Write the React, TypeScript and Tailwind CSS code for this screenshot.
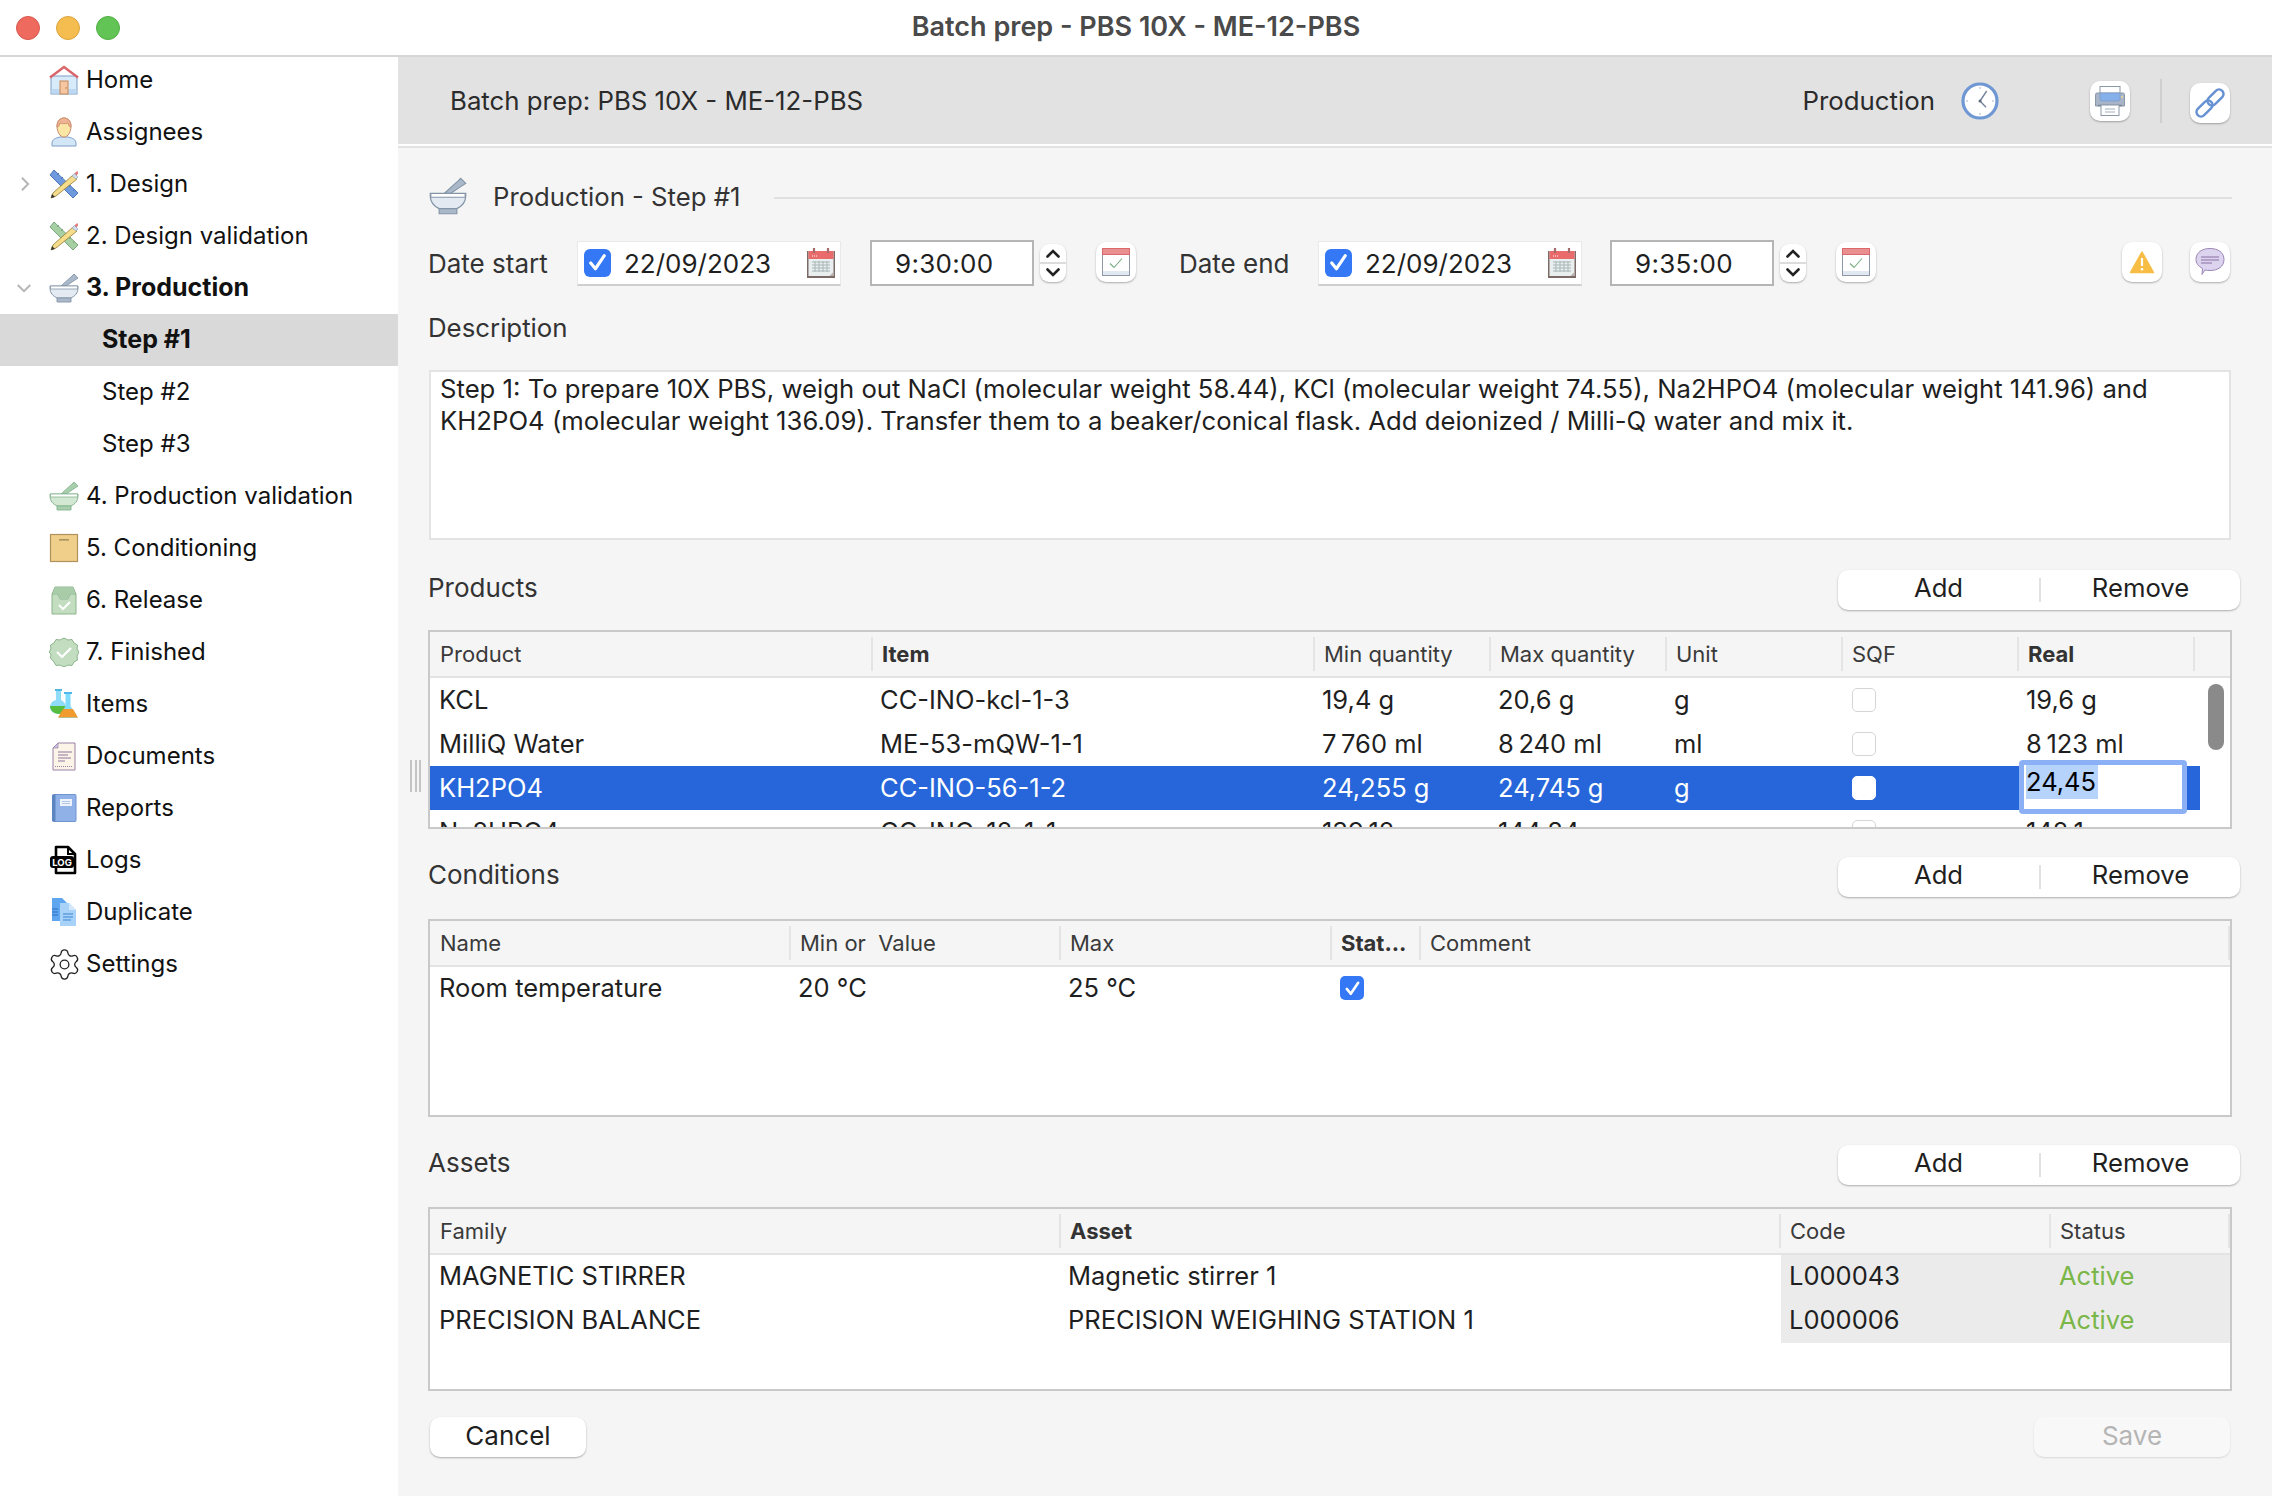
import React from "react";
import { Settings as GearIcon } from "lucide-react";

type IconProps = { className?: string };

const Svg = ({ children, className = "w-[30px] h-[30px]" }: { children: React.ReactNode; className?: string }) => (
  <svg viewBox="0 0 30 30" className={`${className} shrink-0`}>{children}</svg>
);

const HomeIcon = () => (
  <Svg>
    <rect x="2" y="11" width="26" height="18" fill="#d8ebfa" stroke="#7f9fc6" />
    <rect x="2.5" y="24" width="25" height="4.5" fill="#bcd8f2" />
    <path d="M1 12.5 15 2l14 10.5" fill="none" stroke="#d9666b" strokeWidth="2.4" />
    <rect x="11" y="16" width="8" height="13" fill="#f5c6a0" stroke="#c4885a" />
    <circle cx="17" cy="23" r=".7" fill="#a86b3c" />
  </Svg>
);

const PersonIcon = () => (
  <Svg>
    <path d="M3 29v-3c0-3 3-5 8-6h8c5 1 8 3 8 6v3z" fill="#d3e6f8" stroke="#7f9fc6" />
    <path d="M8 9c0-5 3-8 7-8s7 3 7 8c0 6-3 11-7 11S8 15 8 9z" fill="#fbe6a6" stroke="#c98a6a" />
    <path d="M8 10c0-6 3-9 7-9s7 3 7 9l-2-1-1-3c-3 1-6 1-8 0l-1 3z" fill="#eeb394" stroke="#c98a6a" strokeWidth=".8" />
  </Svg>
);

const RulerPencil = ({ ruler, edge }: { ruler: string; edge: string }) => (
  <Svg>
    <path d="M5 1 29 24l-5 5L1 6z" fill={ruler} stroke={edge} />
    <path d="M8 6l2-2M12 10l2-2M16 14l2-2M20 18l2-2M24 22l2-2" stroke={edge} strokeWidth="1" />
    <path d="M24 6l4 4L7 27l-5 2 2-5z" fill="#f6dd8c" stroke="#9d8540" strokeWidth=".9" />
    <path d="M2 29l1-4 3 3z" fill="#333" />
    <path d="M24 6l3-3c1-1 2-1 2 0s0 2-1 3l-1 3z" fill="#e57a7a" />
    <path d="M23 7l2.5-2.5L29 8l-2 2z" fill="#cfdcec" stroke="#8fa0b3" strokeWidth=".6" />
  </Svg>
);

const MortarIcon = ({ fill, band, stroke, className }: { fill: string; band: string; stroke: string } & IconProps) => (
  <Svg className={className}>
    <path d="M12 13 23 3l2-2 4 4-3 2-9 6z" fill={band} stroke={stroke} strokeWidth=".9" />
    <path d="M1 13h28v2c0 5-3 8-7 10H8c-4-2-7-5-7-10z" fill={fill} stroke={stroke} />
    <path d="M1.5 13h27v3h-27z" fill="#ffffff" stroke={stroke} strokeWidth=".8" />
    <path d="M8 25h14v4H8z" fill={band} stroke={stroke} strokeWidth=".9" />
  </Svg>
);

const BoxIcon = () => (
  <Svg>
    <rect x="1.5" y="1.5" width="27" height="27" fill="#f0cf8b" stroke="#b0925a" strokeWidth="1.2" />
    <rect x="10" y="6" width="10" height="1.6" fill="#a8925f" />
  </Svg>
);

const ReleaseIcon = () => (
  <Svg>
    <path d="M3 9 6 2h18l3 7v20H3z" fill="#c3ddc0" stroke="#8cb48c" />
    <path d="M3 9h6l2 5h8l2-5h6" fill="#a5c8a4" stroke="#8cb48c" />
    <path d="M6 2h18l2 7h-5l-2 5h-8L9 9H4z" fill="#a8cba8" />
    <path d="M10 20l4 4 7-7" fill="none" stroke="#ffffff" strokeWidth="2" />
  </Svg>
);

const FinishedIcon = () => (
  <Svg>
    <path d="M15 1l4 2 4-.5 2 3.5 3.5 2-.5 4 2 3-2 4 .5 4-3.5 2-2 3.5-4-.5-4 2-4-2-4 .5-2-3.5L1.5 21l.5-4-2-2 2-3-.5-4L5 6l2-3.5 4 .5z" fill="#c3ddc0" stroke="#8cb48c" />
    <path d="M8 15l5 5 9-9" fill="none" stroke="#ffffff" strokeWidth="2.2" />
  </Svg>
);

const FlasksIcon = () => (
  <Svg>
    <rect x="6" y="0" width="7" height="2" fill="#4fb8e8" />
    <path d="M7 2h5v9c4 2 5 5 5 8 0 4-3 6-7 6s-9-2-9-7c0-3 2-6 6-7z" fill="#8fdcf8" />
    <path d="M1 17h16c1 5-3 8-7 8s-9-3-9-8z" fill="#57bd3f" />
    <rect x="15" y="3" width="8" height="2" fill="#4fb8e8" />
    <path d="M16.5 5h5v12l7 12h-19l7-12z" fill="#7fdcfa" />
    <path d="M14 20h10l5 8.500H9z" fill="#f19a2d" />
  </Svg>
);

const DocIcon = () => (
  <Svg>
    <path d="M9 2h17v27H4V7z" fill="#fcf4e6" stroke="#9a80a8" />
    <path d="M9 2v5H4z" fill="#c9c3e2" stroke="#9a80a8" strokeWidth=".7" />
    <path d="M9 11h14M9 14h10M9 17h13M9 20h7" stroke="#8e74a0" strokeWidth="1" />
    <path d="M6 25.500h18" stroke="#9a80a8" strokeWidth="1.200" strokeDasharray="1 1" />
  </Svg>
);

const BookIcon = () => (
  <Svg>
    <rect x="4" y="1.500" width="23" height="27" rx="1" fill="#8fb1e8" stroke="#6e94d2" />
    <rect x="3" y="1.500" width="3.500" height="27" rx="1" fill="#5d85c2" />
    <rect x="11" y="6" width="12" height="7" fill="#eef2fa" />
    <path d="M13 8.500h8M13 10.500h8" stroke="#b5c7e6" />
  </Svg>
);

const LogIcon = () => (
  <Svg>
    <path d="M7 2h12l7 7v19H7z" fill="#ffffff" stroke="#000000" strokeWidth="2.600" strokeLinejoin="round" />
    <path d="M19 2v7h7" fill="none" stroke="#000000" strokeWidth="2" />
    <rect x="1" y="11" width="24" height="12" rx="3" fill="#000000" />
    <text x="13" y="21" textAnchor="middle" fontSize="9.500" fontWeight="700" fill="#ffffff" fontFamily="Inter, sans-serif">LOG</text>
  </Svg>
);

const DuplicateIcon = () => (
  <Svg>
    <path d="M3 1h10l6 6v17H3z" fill="#5ea6f0" />
    <path d="M3 12h6M3 15h6M3 18h6" stroke="#2c6fc4" strokeWidth="1" />
    <path d="M11 6h9l7 7v16H11z" fill="#a8d2f8" />
    <path d="M20 6v7h7z" fill="#d3e8fc" />
    <path d="M14 17h10M14 20h10M14 23h8" stroke="#3d86d6" strokeWidth="1" />
  </Svg>
);

const MiniCalendar = () => (
  <Svg>
    <rect x="1" y="3" width="28" height="27" fill="#7b6a66" />
    <rect x="2.500" y="3" width="25" height="25" fill="#e9eeee" />
    <path d="M2.500 3h25v8h-25z" fill="#ea6b6b" />
    <path d="M8 0v5M22 0v5" stroke="#a56a6a" strokeWidth="2.200" />
    <path d="M6 8h6" stroke="#ffffff" strokeWidth="1" strokeDasharray="1 1" />
    <path d="M6 14h18M6 17h18M6 20h18M6 23h18M9 13v11M13 13v11M17 13v11M21 13v11" stroke="#a9b6b6" strokeWidth="1" />
    <path d="M27.500 24v4h-4z" fill="#b9b2ae" />
  </Svg>
);

const CalendarCheck = () => (
  <svg viewBox="0 0 28 28" className="w-[28px] h-[28px] shrink-0">
    <rect x=".5" y=".5" width="27" height="27" fill="#ffffff" stroke="#8d97a5" />
    <rect x=".5" y=".5" width="27" height="6" fill="#ea8f8f" stroke="#d9696b" strokeWidth="1" />
    <rect x="1" y="23" width="26" height="4" fill="#e2e8f1" />
    <path d="M8 15.500l4 4 8-9" fill="none" stroke="#78ad80" strokeWidth="1.100" />
  </svg>
);

const Check = ({ className }: IconProps) => (
  <svg viewBox="0 0 24 24" className={className}><path d="M5.500 12.500l4.500 5.500L18.500 5.500" fill="none" stroke="#ffffff" strokeWidth="3" strokeLinecap="round" strokeLinejoin="round" /></svg>
);

const BlueCheck = ({ large }: { large?: boolean }) => (
  <span className={`flex items-center justify-center bg-[#3478f6] ${large ? "w-[27px] h-[28px] rounded-[6px]" : "w-[24px] h-[24px] rounded-[5px]"}`}>
    <Check className={large ? "w-[25px] h-[25px]" : "w-[21px] h-[21px]"} />
  </span>
);

const IconButton = ({ children, className = "" }: { children: React.ReactNode; className?: string }) => (
  <div className={`w-[40px] h-[40px] shrink-0 rounded-[10px] bg-white shadow-[0_1px_2px_rgba(0,0,0,0.3)] flex items-center justify-center ${className}`}>
    {children}
  </div>
);

const Stepper = () => (
  <div className="w-[26px] h-[38px] ml-[6px] rounded-[9px] bg-white shadow-[0_1px_2px_rgba(0,0,0,0.3)] flex flex-col items-center justify-between py-[5px] relative">
    <svg viewBox="0 0 14 9" className="w-[14px] h-[9px]"><path d="M1.500 7.500 7 2l5.500 5.500" fill="none" stroke="#222" strokeWidth="2.600" strokeLinecap="round" /></svg>
    <span className="absolute left-0 right-0 top-[18px] h-[2px] bg-[#dcdcdc]" />
    <svg viewBox="0 0 14 9" className="w-[14px] h-[9px]"><path d="M1.500 1.500 7 7l5.500-5.500" fill="none" stroke="#222" strokeWidth="2.600" strokeLinecap="round" /></svg>
  </div>
);

const DateField = ({ value }: { value: string }) => (
  <div className="w-[264px] h-[45px] bg-white border border-[#e9e9e9] border-b-2 border-b-[#cfcfcf] flex items-center pl-[6px] pr-[4px]">
    <BlueCheck large />
    <span className="ml-[13px] text-[#1f1f1f] text-[26px] flex-1 pt-[1px]">{value}</span>
    <MiniCalendar />
  </div>
);

const TimeField = ({ value }: { value: string }) => (
  <div className="w-[164px] h-[46px] bg-white border-2 border-[#b5b5b5] flex items-center pl-[23px] text-[26px] tracking-[0.3px] text-[#1f1f1f]">{value}</div>
);

const NAV = [
  { label: "Home", icon: <HomeIcon /> },
  { label: "Assignees", icon: <PersonIcon /> },
  { label: "1. Design", icon: <RulerPencil ruler="#6f9ade" edge="#4f78b8" />, chevron: "right" },
  { label: "2. Design validation", icon: <RulerPencil ruler="#a6d0a3" edge="#7aa67c" /> },
  { label: "3. Production", icon: <MortarIcon fill="#e3eaf2" band="#aab9c9" stroke="#8495a8" />, chevron: "down", bold: true },
  { label: "Step #1", sub: true, bold: true, selected: true },
  { label: "Step #2", sub: true },
  { label: "Step #3", sub: true },
  { label: "4. Production validation", icon: <MortarIcon fill="#d2e8d3" band="#a8cfad" stroke="#86b490" /> },
  { label: "5. Conditioning", icon: <BoxIcon /> },
  { label: "6. Release", icon: <ReleaseIcon /> },
  { label: "7. Finished", icon: <FinishedIcon /> },
  { label: "Items", icon: <FlasksIcon /> },
  { label: "Documents", icon: <DocIcon /> },
  { label: "Reports", icon: <BookIcon /> },
  { label: "Logs", icon: <LogIcon /> },
  { label: "Duplicate", icon: <DuplicateIcon /> },
  { label: "Settings", icon: <GearIcon className="w-[35px] h-[35px] -mx-[2.5px] shrink-0 text-[#222]" strokeWidth={0.9} /> },
];

const Sidebar = () => (
  <aside className="w-[398px] shrink-0 bg-white">
    <ul className="-mt-[3px]">
      {NAV.map((item) => (
        <li key={item.label} className={`h-[52px] flex items-center text-[#111] ${item.selected ? "bg-[#d9d9d9]" : ""} ${item.bold ? "font-bold text-[25px]" : "text-[24px]"}`}>
          {item.sub ? (
            <span className="pl-[102px]">{item.label}</span>
          ) : (
            <>
              <span className="w-[49px] flex justify-center pl-[2px]">
                {item.chevron === "right" && (
                  <svg viewBox="0 0 12 18" className="w-[11px] h-[16px]"><path d="M2 2l7 7-7 7" fill="none" stroke="#b5b5b5" strokeWidth="2.200" /></svg>
                )}
                {item.chevron === "down" && (
                  <svg viewBox="0 0 18 12" className="w-[16px] h-[11px] -ml-[4px]"><path d="M2 2l7 7 7-7" fill="none" stroke="#b5b5b5" strokeWidth="2.200" /></svg>
                )}
              </span>
              {item.icon}
              <span className="ml-[7px]">{item.label}</span>
            </>
          )}
        </li>
      ))}
    </ul>
  </aside>
);

const SectionHead = ({ title }: { title: string }) => (
  <div className="flex items-start justify-between h-[41px] -mr-[8px]">
    <span className="h-[40px] flex items-center pb-[5px] text-[26px] text-[#333]">{title}</span>
    <div className="w-[402px] h-[40px] rounded-[10px] bg-white shadow-[0_1px_2px_rgba(0,0,0,0.3)] flex items-center text-[25.700px] text-[#1f1f1f]">
      <span className="w-[201px] text-center pb-[3px]">Add</span>
      <span className="w-[2px] h-[24px] bg-[#e2e2e2]" />
      <span className="flex-1 text-center pb-[3px]">Remove</span>
    </div>
  </div>
);

const HeaderCell = ({ children, bold, last }: { children?: React.ReactNode; bold?: boolean; last?: boolean }) => (
  <div className="flex items-center justify-between pl-[9px] first:pl-[10px] h-[44px]">
    <span className={`text-[22px] whitespace-nowrap ${bold ? "font-bold text-[#333]" : "text-[#3a3a3a]"}`}>{children}</span>
    {!last && <span className="w-[2px] h-[34px] bg-[#e4e4e4] shrink-0" />}
  </div>
);

const PRODUCT_COLS = "grid grid-cols-[443px_442px_176px_176px_176px_176px_176px]";
const PRODUCTS = [
  ["KCL", "CC-INO-kcl-1-3", "19,4 g", "20,6 g", "g", "19,6 g"],
  ["MilliQ Water", "ME-53-mQW-1-1", "7\u2009760 ml", "8\u2009240 ml", "ml", "8\u2009123 ml"],
  ["KH2PO4", "CC-INO-56-1-2", "24,255 g", "24,745 g", "g", ""],
  ["Na2HPO4", "CC-INO-12-1-1", "139,12 g", "144,84 g", "g", "142,1 g"],
];

const ProductsTable = () => (
  <div className="mt-[19px] h-[199px] border-2 border-[#c9c9c9] bg-white overflow-hidden relative">
    <div className={`${PRODUCT_COLS} bg-[#f5f5f5] border-b-2 border-[#e3e3e3]`}>
      <HeaderCell>Product</HeaderCell>
      <HeaderCell bold>Item</HeaderCell>
      <HeaderCell>Min quantity</HeaderCell>
      <HeaderCell>Max quantity</HeaderCell>
      <HeaderCell>Unit</HeaderCell>
      <HeaderCell>SQF</HeaderCell>
      <HeaderCell bold>Real</HeaderCell>
    </div>
    {PRODUCTS.map((row, i) => {
      const selected = i === 2;
      return (
        <div key={row[0]} className={`${PRODUCT_COLS} w-[1770px] h-[44px] text-[25.500px] items-center ${selected ? "bg-[#2666da] text-white" : "text-[#1f1f1f]"}`}>
          <div className="pl-[9px]">{row[0]}</div>
          <div className="pl-[7px]">{row[1]}</div>
          <div className="pl-[7px]">{row[2]}</div>
          <div className="pl-[7px]">{row[3]}</div>
          <div className="pl-[7px]">{row[4]}</div>
          <div className="pl-[9px]">
            <span className={`block w-[24px] h-[24px] rounded-[5px] border border-[#d5d5d5] bg-white ${selected ? "border-white" : ""}`} />
          </div>
          <div className="pl-[7px] relative h-full flex items-center">
            {selected ? (
              <div className="absolute left-0 -top-[6px] w-[168px] h-[54px] bg-white border-[5px] border-[#8cb0f5] rounded-[4px] text-black pl-[2px]">
                <span className="bg-[#b5d3fb] inline-block pr-[2px] leading-[34px] align-top">24,45</span>
              </div>
            ) : (
              row[5]
            )}
          </div>
        </div>
      );
    })}
    <div className="absolute left-[1778px] top-[52px] w-[16px] h-[66px] rounded-full bg-[#8a8a8a]" />
  </div>
);

const ConditionsTable = () => (
  <div className="mt-[21px] h-[198px] border-2 border-[#c9c9c9] bg-white">
    <div className="grid grid-cols-[361px_270px_271px_89px_1fr] bg-[#f5f5f5] border-b-2 border-[#e3e3e3]">
      <HeaderCell>Name</HeaderCell>
      <HeaderCell>Min or&nbsp; Value</HeaderCell>
      <HeaderCell>Max</HeaderCell>
      <HeaderCell bold>Stat...</HeaderCell>
      <HeaderCell>Comment</HeaderCell>
    </div>
    <div className="grid grid-cols-[361px_270px_271px_89px_1fr] h-[44px] items-center text-[25.500px] text-[#1f1f1f]">
      <div className="pl-[9px] pb-[1px]">Room temperature</div>
      <div className="pl-[7px] pb-[1px]">20 °C</div>
      <div className="pl-[7px] pb-[1px]">25 °C</div>
      <div className="pl-[8px] pb-[2px]"><BlueCheck /></div>
      <div />
    </div>
  </div>
);

const ASSETS = [
  ["MAGNETIC STIRRER", "Magnetic stirrer 1", "L000043"],
  ["PRECISION BALANCE", "PRECISION WEIGHING STATION 1", "L000006"],
];

const AssetsTable = () => (
  <div className="mt-[21px] h-[184px] border-2 border-[#c9c9c9] bg-white">
    <div className="grid grid-cols-[631px_720px_270px_1fr] bg-[#f5f5f5] border-b-2 border-[#e3e3e3]">
      <HeaderCell>Family</HeaderCell>
      <HeaderCell bold>Asset</HeaderCell>
      <HeaderCell>Code</HeaderCell>
      <HeaderCell>Status</HeaderCell>
    </div>
    {ASSETS.map((row) => (
      <div key={row[0]} className="grid grid-cols-[631px_720px_270px_1fr] h-[44px] items-center text-[25.500px] text-[#1f1f1f]">
        <div className="pl-[9px] pb-[1px]">{row[0]}</div>
        <div className="pl-[7px] pb-[1px]">{row[1]}</div>
        <div className="pl-[8px] pb-[1px] h-full flex items-center bg-[#ebebeb]">{row[2]}</div>
        <div className="pl-[8px] pb-[1px] h-full flex items-center bg-[#ebebeb] text-[#7ab648]">Active</div>
      </div>
    ))}
  </div>
);

const BatchStep = () => (
  <main className="flex-1 flex flex-col bg-[#f5f5f5]">
    <div className="h-[87px] bg-[#e2e2e2] flex items-center pl-[52px] pr-[42px] text-[25.800px] text-[#2b2b2b]">
      <span className="flex-1 pt-[2px]">Batch prep: PBS 10X - ME-12-PBS</span>
      <span className="pt-[2px]">Production</span>
      <svg viewBox="0 0 38 38" className="w-[38px] h-[38px] ml-[26px]">
        <circle cx="19" cy="19" r="17" fill="#ffffff" stroke="#6f97d3" strokeWidth="3.200" />
        <path d="M19 5v2M19 31v2M5 19h2M31 19h2" stroke="#c3cfdc" strokeWidth="1.500" />
        <path d="M25.700 9 19 19l6 6.300" fill="none" stroke="#76859a" strokeWidth="1.400" />
        <circle cx="19" cy="19" r="1.500" fill="#5c6b7e" />
      </svg>
      <IconButton className="ml-[91px]">
        <svg viewBox="0 0 30 30" className="w-[30px] h-[30px]">
          <rect x="5" y=".5" width="20" height="14" fill="#ffffff" stroke="#8b98a8" />
          <path d="M2 7h26a1.500 1.500 0 0 1 1.500 1.500V20H.5V8.500A1.500 1.500 0 0 1 2 7z" fill="#a8b5c8" stroke="#8b98a8" />
          <path d="M5 7h20v6a2 2 0 0 1-2 2H7a2 2 0 0 1-2-2z" fill="#86b0ea" stroke="#7f9cc6" strokeWidth=".8" />
          <circle cx="27" cy="11" r="1" fill="#f5dc8b" />
          <path d="M3 19.500h24" stroke="#7b8899" strokeWidth="1.500" />
          <rect x="6" y="19" width="18" height="10.500" fill="#ffffff" stroke="#8b98a8" />
          <path d="M10 23h10M10 26h10" stroke="#a4afbd" strokeWidth="1.100" />
        </svg>
      </IconButton>
      <span className="w-[2px] h-[44px] bg-[#cfcfcf] ml-[30px]" />
      <IconButton className="ml-[28px] mt-[4px]">
        <svg viewBox="0 0 30 30" className="w-[30px] h-[30px]" fill="none" stroke="#6590d2" strokeWidth="2.400">
          <rect x="-9.500" y="-4.500" width="19" height="9" rx="4.500" transform="translate(20.500 9.500) rotate(-45)" />
          <rect x="-9.500" y="-4.500" width="19" height="9" rx="4.500" transform="translate(9.500 20.500) rotate(-45)" />
        </svg>
      </IconButton>
    </div>
    <div className="h-[4px] border-t-2 border-white bg-[#e2e2e2]" />

    <div className="pl-[30px] pr-[40px] flex flex-col">
      <div className="mt-[29px] h-[38px] flex items-center">
        <MortarIcon fill="#e3eaf2" band="#aab9c9" stroke="#8495a8" className="w-[38px] h-[38px] ml-[1px]" />
        <span className="ml-[26px] pt-[2px] text-[25.700px] text-[#333]">Production - Step #1</span>
        <span className="flex-1 h-[2px] bg-[#e0e0e0] ml-[34px] mt-[4px]" />
      </div>

      <div className="mt-[25px] h-[46px] flex items-center text-[26px] text-[#333]">
        <span className="w-[149px]">Date start</span>
        <DateField value="22/09/2023" />
        <div className="w-[29px]" />
        <TimeField value="9:30:00" />
        <Stepper />
        <IconButton className="ml-[30px] -mt-[2px]"><CalendarCheck /></IconButton>
        <span className="ml-[43px] w-[139px]">Date end</span>
        <DateField value="22/09/2023" />
        <div className="w-[28px]" />
        <TimeField value="9:35:00" />
        <Stepper />
        <IconButton className="ml-[30px] -mt-[2px]"><CalendarCheck /></IconButton>
        <IconButton className="ml-auto -mt-[2px]">
          <svg viewBox="0 0 30 30" className="w-[30px] h-[30px]">
            <path d="M15 5 26.500 25.500h-23z" fill="#f7bd45" stroke="#f7bd45" strokeLinejoin="round" strokeWidth="1.500" />
            <path d="M15 11v8" stroke="#ffffff" strokeWidth="2.200" />
            <circle cx="15" cy="22.300" r="1.300" fill="#ffffff" />
          </svg>
        </IconButton>
        <IconButton className="ml-[28px] -mt-[2px] mr-[2px]">
          <svg viewBox="0 0 30 30" className="w-[30px] h-[30px]">
            <path d="M15 1.500c8 0 14 4 14 11s-6 11-14 11c-2 0-3 0-5-.5l-2.500 3.500-.5 1 .5-6C3 19 1 16 1 12.500 1 5.500 7 1.500 15 1.500z" fill="#dcd4ee" stroke="#9c86b5" />
            <path d="M6 10h18M6 13h18M6 16h11" stroke="#8a6fa5" strokeWidth="1.100" />
          </svg>
        </IconButton>
      </div>

      <div className="mt-[26px] h-[32px] leading-[32px] text-[25.800px] text-[#333]">Description</div>
      <div className="mt-[26px] h-[170px] bg-white border-2 border-[#e3e3e3] ml-[1px] mr-[1px] px-[9px] pt-[1px] text-[25.700px] leading-[32px] text-[#1f1f1f]">
        Step 1: To prepare 10X PBS, weigh out NaCl (molecular weight 58.44), KCl (molecular weight 74.55), Na2HPO4 (molecular weight 141.96) and KH2PO4 (molecular weight 136.09). Transfer them to a beaker/conical flask. Add deionized / Milli-Q water and mix it.
      </div>

      <div className="mt-[30px]"><SectionHead title="Products" /></div>
      <ProductsTable />

      <div className="mt-[28px]"><SectionHead title="Conditions" /></div>
      <ConditionsTable />

      <div className="mt-[28px]"><SectionHead title="Assets" /></div>
      <AssetsTable />

      <div className="mt-[26px] flex justify-between text-[26px]">
        <div className="ml-[2px] w-[156px] h-[40px] rounded-[10px] bg-white shadow-[0_1px_2px_rgba(0,0,0,0.3)] flex items-center justify-center pb-[3px] text-[#1f1f1f]">Cancel</div>
        <div className="mr-[2px] w-[196px] h-[40px] rounded-[10px] bg-[#f8f8f8] shadow-[0_1px_2px_rgba(0,0,0,0.12)] flex items-center justify-center pb-[3px] text-[#b5b5b5]">Save</div>
      </div>
    </div>
  </main>
);

export default function App() {
  return (
    <div className="w-[2272px] h-[1496px] flex flex-col overflow-hidden bg-white antialiased [font-family:Inter,sans-serif] relative">
      <header className="h-[57px] shrink-0 relative flex items-center justify-center border-b-2 border-[#d6d6d6] bg-white z-10">
        <div className="absolute left-[16px] top-[16px] flex gap-[16px]">
          <span className="w-[24px] h-[24px] rounded-full bg-[#ee6a5f] border border-[#d9574d]" />
          <span className="w-[24px] h-[24px] rounded-full bg-[#f5bd4f] border border-[#dba63c]" />
          <span className="w-[24px] h-[24px] rounded-full bg-[#61c454] border border-[#52ad46]" />
        </div>
        <span className="text-[27px] font-semibold text-[#4a4a4a]">Batch prep - PBS 10X - ME-12-PBS</span>
      </header>
      <div className="flex flex-1 min-h-0 relative">
        <Sidebar />
        <BatchStep />
        <div className="absolute left-[410px] top-[703px] w-[11px] h-[32px] flex justify-between">
          <span className="w-[2px] bg-[#c4c4c4]" />
          <span className="w-[2px] bg-[#c4c4c4]" />
          <span className="w-[2px] bg-[#c4c4c4]" />
        </div>
      </div>
    </div>
  );
}
